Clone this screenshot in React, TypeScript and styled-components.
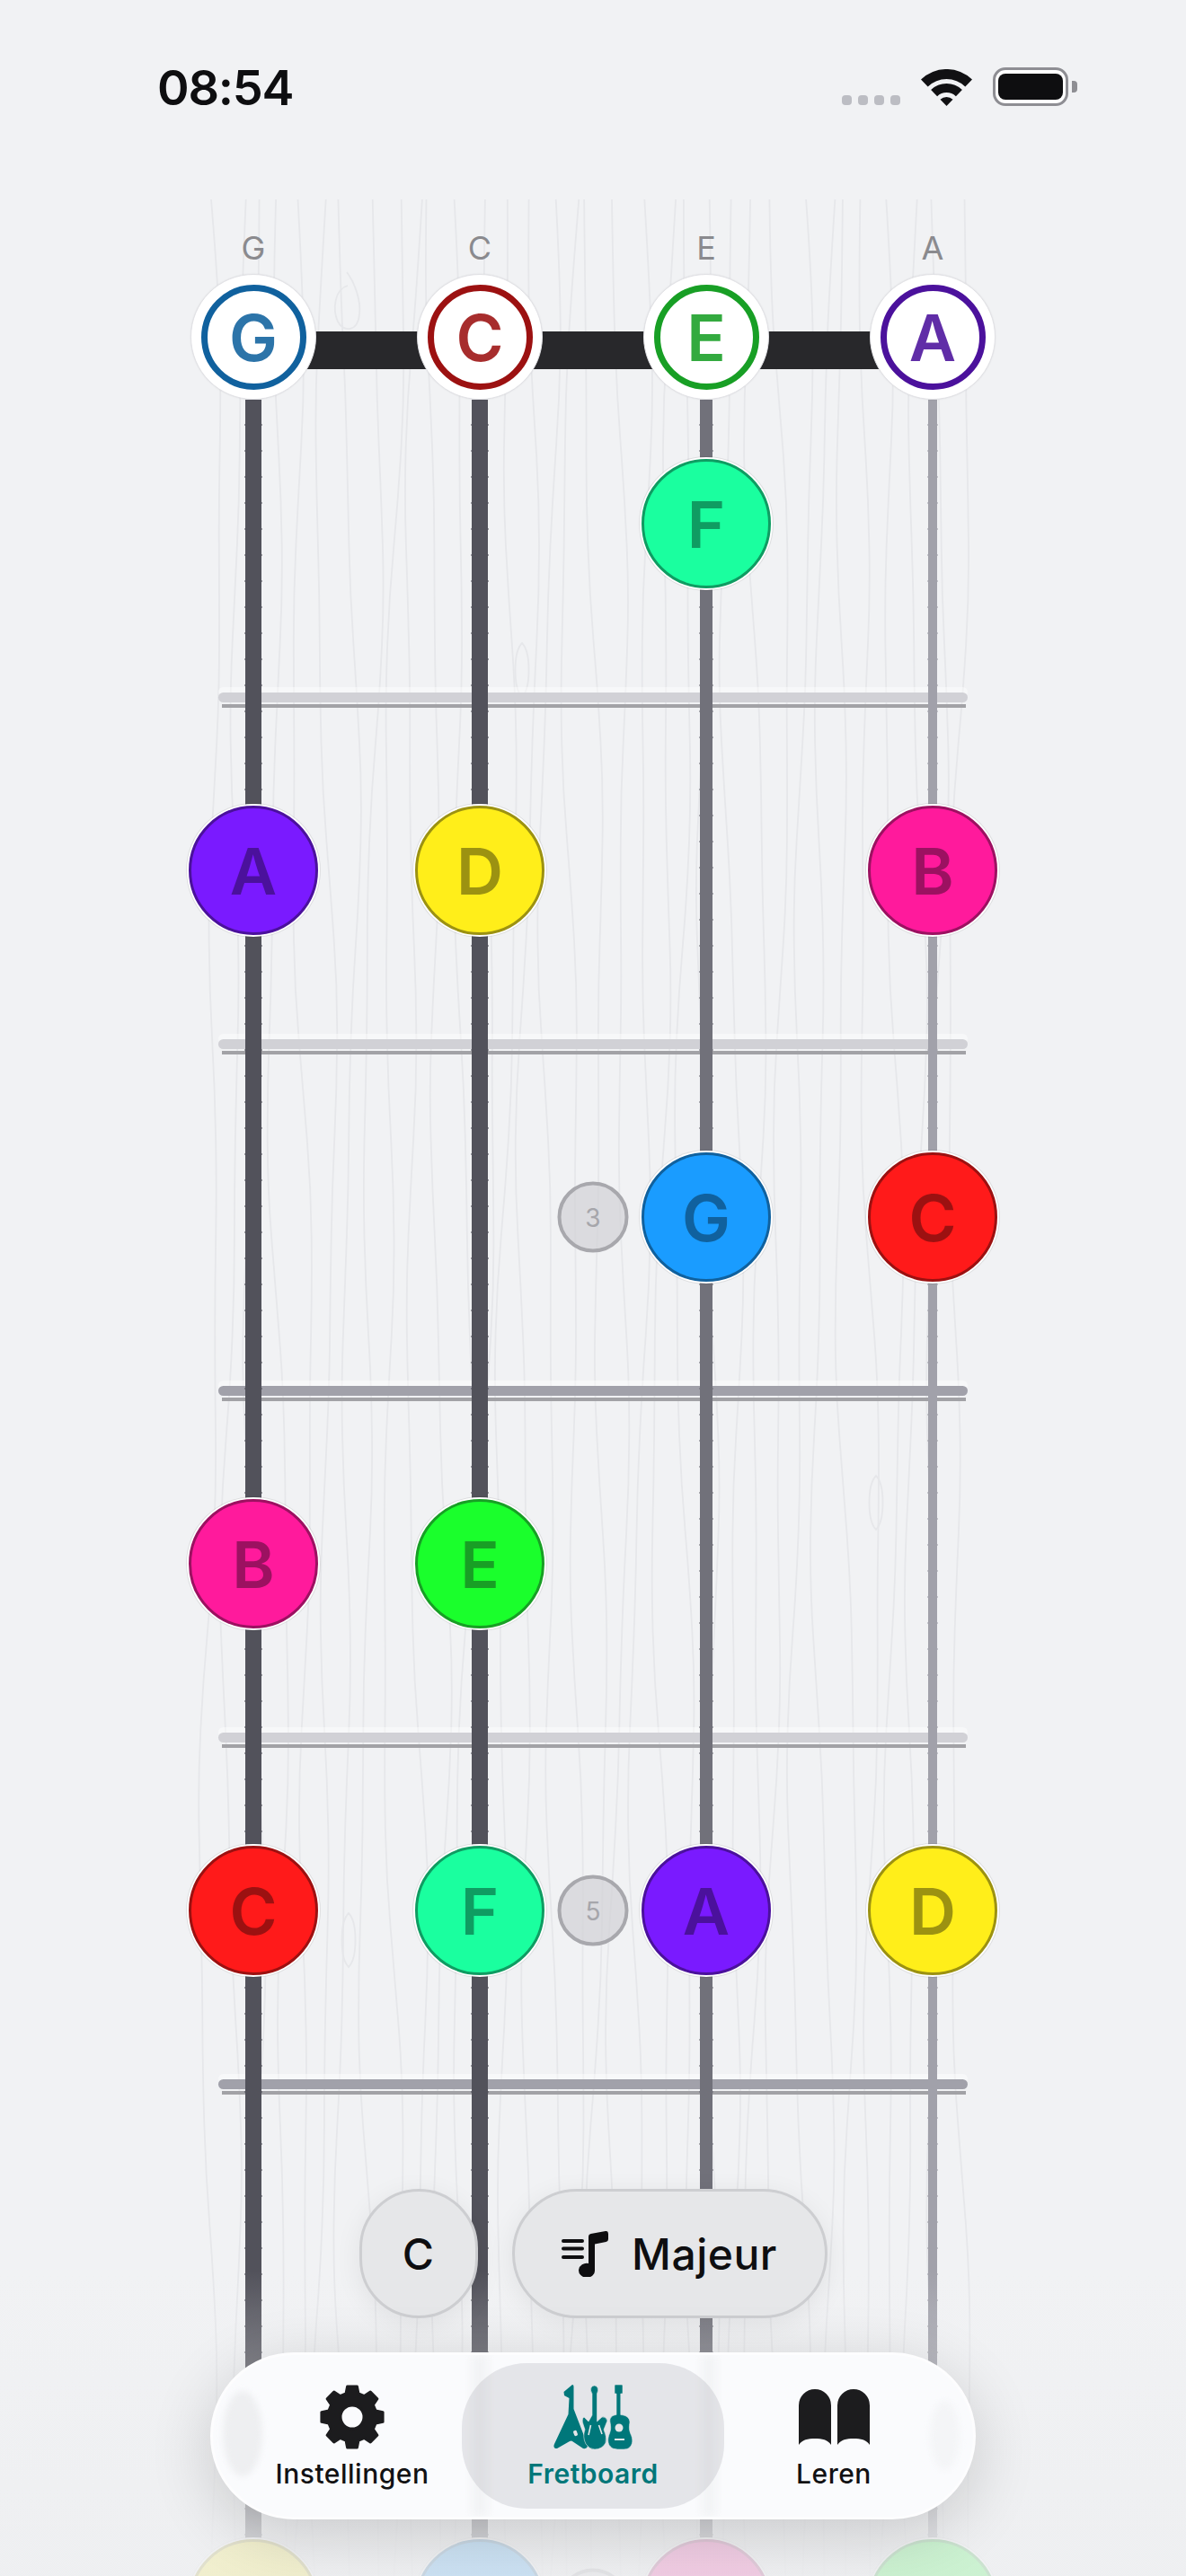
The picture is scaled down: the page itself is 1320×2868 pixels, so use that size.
import React from "react";
import styled, { createGlobalStyle } from "styled-components";

const GlobalStyle = createGlobalStyle`
  html, body {
    margin: 0;
    padding: 0;
    background: #f1f2f4;
  }
  * {
    box-sizing: border-box;
  }
`;

const Page = styled.div`
  position: relative;
  width: 1320px;
  height: 2868px;
  overflow: hidden;
  background: #f1f2f4;
  font-family: Inter, "Noto Sans", sans-serif;
  color: #0e0e10;
`;

/* status bar */
const StatusBar = styled.div`
  display: flex;
  justify-content: space-between;
  align-items: flex-start;
  height: 222px;
  padding: 75px 121px 0 175px;
`;
const Time = styled.div`
  font-size: 54px;
  font-weight: 600;
  line-height: 45px;
  letter-spacing: -1.2px;
`;
const StatusIcons = styled.div`
  display: flex;
  align-items: flex-end;
  gap: 23px;
  height: 43px;
`;
const Signal = styled.div`
  display: flex;
  gap: 7px;
  margin-bottom: 1px;
`;
const SignalDot = styled.span`
  width: 11px;
  height: 11px;
  border-radius: 4px;
  background: #bcbdc3;
`;
const Battery = styled.div`
  display: flex;
  align-items: center;
  gap: 4px;
`;
const BatteryBody = styled.div`
  width: 84px;
  height: 43px;
  padding: 4px 3px;
  border: 3px solid #8e8e93;
  border-radius: 14px;
  background: #fff;
`;
const BatteryFill = styled.div`
  height: 100%;
  border-radius: 8px;
  background: #0e0e10;
`;
const BatteryTip = styled.div`
  width: 6px;
  height: 13px;
  border-radius: 0 4px 4px 0;
  background: #8e8e93;
`;

/* fretboard */
const Board = styled.div`
  position: relative;
  width: 1008px;
  margin: 0 auto;
`;
const Grain = styled.svg`
  position: absolute;
  top: 0;
  left: -156px;
  width: 1320px;
  height: 2646px;
`;
const Strings = styled.div`
  position: absolute;
  top: 223px;
  left: 0;
  right: 0;
  height: 2423px;
  z-index: 2;
  display: grid;
  grid-template-columns: repeat(4, 252px);
  justify-items: center;
`;
const GuitarString = styled.div<{ $width: number; $color: string }>`
  position: relative;
  width: ${(p) => p.$width}px;
  background: ${(p) => p.$color};

  &::before {
    content: "";
    position: absolute;
    top: 0;
    bottom: 0;
    left: -1px;
    right: -1px;
    background: repeating-linear-gradient(
      to bottom,
      transparent 0,
      transparent 27px,
      ${(p) => p.$color}88 27px,
      ${(p) => p.$color}88 29px
    );
  }
`;
const LabelRow = styled.div`
  position: relative;
  display: grid;
  grid-template-columns: repeat(4, 252px);
  padding: 32px 0 7px;
`;
const StringLabel = styled.div`
  font-size: 36px;
  line-height: 44px;
  text-align: center;
  color: #8a8a8e;
`;
const NutRow = styled.div`
  position: relative;
  display: grid;
  grid-template-columns: repeat(4, 252px);
  justify-items: center;
  height: 140px;
  margin-bottom: -55px;

  &::before {
    content: "";
    position: absolute;
    top: 64px;
    left: 126px;
    right: 126px;
    height: 42px;
    background: #28282b;
    z-index: 2;
  }
`;
const OpenNote = styled.div<{ $dark: string }>`
  position: relative;
  z-index: 3;
  display: flex;
  align-items: center;
  justify-content: center;
  width: 140px;
  height: 140px;
  border: 1.5px solid #e1e1e5;
  border-radius: 50%;
  background: #fff;
  box-shadow: 0 0 2px rgba(0, 0, 0, 0.08);
  font-size: 72px;
  font-weight: 600;
  color: ${(p) => p.$dark};

  &::after {
    content: "";
    position: absolute;
    inset: 10.5px;
    border: 7px solid ${(p) => p.$dark};
    border-radius: 50%;
  }
`;
const OpenLetter = styled.span`
  opacity: 0.88;
`;
const FretRow = styled.div<{ $bar: string }>`
  position: relative;
  display: grid;
  grid-template-columns: repeat(4, 252px);
  grid-template-rows: 386px;
  justify-items: center;
  align-items: center;

  &::before {
    content: "";
    position: absolute;
    left: 87px;
    right: 87px;
    bottom: -6px;
    height: 11px;
    border-radius: 6px;
    background: ${(p) => p.$bar};
    box-shadow: 0 -6px 0 rgba(255, 255, 255, 0.45);
    z-index: 1;
  }

  &::after {
    content: "";
    position: absolute;
    left: 91px;
    right: 89px;
    bottom: -12px;
    height: 4px;
    background: #a2a2a6;
    z-index: 1;
  }
`;
const Note = styled.div<{ $fill: string; $dark: string }>`
  position: relative;
  z-index: 3;
  display: flex;
  align-items: center;
  justify-content: center;
  width: 144px;
  height: 144px;
  border: 3px solid ${(p) => p.$dark};
  border-radius: 50%;
  background: ${(p) => p.$fill};
  box-shadow: 0 0 0 2px #fff, 0 0 0 3px rgba(0, 0, 0, 0.08);
  font-size: 72px;
  font-weight: 600;
  color: ${(p) => p.$dark};
`;
const Marker = styled.div`
  position: absolute;
  top: 50%;
  left: 50%;
  z-index: 3;
  display: flex;
  align-items: center;
  justify-content: center;
  width: 79px;
  height: 79px;
  transform: translate(-50%, -50%);
  border: 4px solid #a8a8ad;
  border-radius: 50%;
  background: rgba(209, 209, 214, 0.7);
  font-size: 28px;
  color: #a6a6ab;
`;

/* fade at the bottom of the screen */
const BottomFade = styled.div`
  position: absolute;
  left: 0;
  right: 0;
  bottom: 0;
  height: 340px;
  z-index: 4;
  background: linear-gradient(to bottom, rgba(238, 239, 241, 0), rgba(238, 239, 241, 0.84) 90%);
`;

/* floating controls */
const Dock = styled.div`
  position: absolute;
  top: 2437px;
  left: 0;
  right: 0;
  z-index: 5;
  display: flex;
  flex-direction: column;
  align-items: center;
  gap: 38px;
`;
const Controls = styled.div`
  display: flex;
  gap: 38px;
`;
const ControlButton = styled.div<{ $width: number }>`
  display: flex;
  align-items: center;
  justify-content: center;
  gap: 26px;
  width: ${(p) => p.$width}px;
  height: 144px;
  border: 3px solid #cdced1;
  border-radius: 72px;
  background: #e6e7e9;
  box-shadow: 0 6px 30px rgba(0, 0, 0, 0.07);
  font-size: 48px;
  font-weight: 500;
  letter-spacing: 0.5px;
`;
const TabBar = styled.div`
  position: relative;
  display: flex;
  justify-content: center;
  width: 852px;
  height: 186px;
  padding-top: 9px;
  overflow: hidden;
  border: 3px solid #fdfdfe;
  border-radius: 93px;
  background: #fafbfd;
  box-shadow: 0 16px 70px rgba(0, 0, 0, 0.16);
`;
// what the glass bends of the strings behind it
const GlassBand = styled.div<{ $left: number; $width: number }>`
  position: absolute;
  top: 0;
  bottom: 0;
  left: ${(p) => p.$left}px;
  width: ${(p) => p.$width}px;
  background: #f2f3f5;
  filter: blur(5px);
`;
const GlassSpot = styled.div<{ $left: number; $top: number; $width: number; $height: number; $color: string }>`
  position: absolute;
  top: ${(p) => p.$top}px;
  left: ${(p) => p.$left}px;
  width: ${(p) => p.$width}px;
  height: ${(p) => p.$height}px;
  border-radius: 50%;
  background: ${(p) => p.$color};
  filter: blur(3px);
`;
const Tab = styled.div<{ $active?: boolean }>`
  position: relative;
  display: flex;
  flex-direction: column;
  align-items: center;
  flex: none;
  width: 292px;
  height: 162px;
  margin: 0 -12px;
  padding-top: 24px;
  border-radius: 72px;
  background: ${(p) => (p.$active ? "rgba(120, 120, 128, 0.16)" : "transparent")};
  color: ${(p) => (p.$active ? "#00777a" : "#111113")};
`;
const TabIcon = styled.div`
  display: flex;
  align-items: center;
  justify-content: center;
  height: 72px;
`;
const TabLabel = styled.div<{ $active?: boolean }>`
  margin-top: 9px;
  font-size: 30px;
  line-height: 36px;
  font-weight: ${(p) => (p.$active ? 600 : 500)};
  letter-spacing: 0.5px;
`;

type NoteName = "A" | "B" | "C" | "D" | "E" | "F" | "G";

const noteColors: Record<NoteName, { fill: string; dark: string }> = {
  A: { fill: "#7a1aff", dark: "#4b119c" },
  B: { fill: "#ff1a9c", dark: "#9c1161" },
  C: { fill: "#ff1a1a", dark: "#9c1111" },
  D: { fill: "#ffee1a", dark: "#9c9211" },
  E: { fill: "#1aff2c", dark: "#189f25" },
  F: { fill: "#1aff9f", dark: "#0f9c62" },
  G: { fill: "#1a9cff", dark: "#10619e" },
};

const openStrings: NoteName[] = ["G", "C", "E", "A"];

const stringStyles = [
  { width: 18, color: "#52525b" },
  { width: 18, color: "#52525b" },
  { width: 14, color: "#71717a" },
  { width: 10, color: "#a1a1aa" },
];

const frets: { notes: (NoteName | null)[]; bar: string; marker?: number }[] = [
  { notes: [null, null, "F", null], bar: "#d1d1d6" },
  { notes: ["A", "D", null, "B"], bar: "#d1d1d6" },
  { notes: [null, null, "G", "C"], bar: "#a1a1aa", marker: 3 },
  { notes: ["B", "E", null, null], bar: "#d1d1d6" },
  { notes: ["C", "F", "A", "D"], bar: "#a1a1aa", marker: 5 },
  { notes: [null, null, null, null], bar: "#d1d1d6" },
  { notes: ["D", "G", "B", "E"], bar: "#a1a1aa", marker: 7 },
];

// wobbly wood lines, same result on every run
function grainLine(baseX: number, index: number) {
  const points: [number, number][] = [];
  for (let y = 0; y <= 2750; y += 110) {
    const wobble =
      Math.sin(y / 170 + index * 1.7) * 7 + Math.sin(y / 73 + index * 2.9) * 3 + Math.sin(y / 410 + index) * 7;
    points.push([baseX + wobble, y]);
  }
  let d = `M${points[0][0].toFixed(1)} 0`;
  for (let i = 1; i < points.length - 1; i++) {
    const midX = (points[i][0] + points[i + 1][0]) / 2;
    const midY = (points[i][1] + points[i + 1][1]) / 2;
    d += ` Q${points[i][0].toFixed(1)} ${points[i][1]} ${midX.toFixed(1)} ${midY}`;
  }
  return d;
}

const grainLines = Array.from({ length: 34 }, (_, i) => grainLine(235 + i * 25.2, i));

function gearPath() {
  const cx = 36;
  const cy = 36;
  const polar = (r: number, deg: number) => {
    const a = (deg * Math.PI) / 180;
    return `${(cx + r * Math.cos(a)).toFixed(2)} ${(cy + r * Math.sin(a)).toFixed(2)}`;
  };
  let d = "";
  for (let i = 0; i < 8; i++) {
    const a = i * 45 - 90;
    d += `${i === 0 ? "M" : "L"}${polar(27, a - 15)} L${polar(34.5, a - 9)} L${polar(34.5, a + 9)} L${polar(27, a + 15)} `;
  }
  return `${d}Z M${cx - 13} ${cy} a13 13 0 1 0 26 0 a13 13 0 1 0 -26 0 Z`;
}

function WifiIcon() {
  return (
    <svg width="57" height="41" viewBox="0 0 57 41" fill="#111113">
      <path d="M0 11.5 A41 41 0 0 1 57 11.5 L49.3 19.4 A30 30 0 0 0 7.7 19.4 Z" />
      <path d="M11.1 23 A25 25 0 0 1 45.9 23 L38.9 30.2 A15 15 0 0 0 18.1 30.2 Z" />
      <path d="M21.5 33.8 A10 10 0 0 1 35.5 33.8 L28.5 41 Z" />
    </svg>
  );
}

function ScaleIcon() {
  return (
    <svg width="52" height="51" viewBox="0 0 52 51" fill="#0e0e10">
      <rect x="0" y="9" width="25" height="4" rx="2" />
      <rect x="0" y="17.5" width="25" height="4" rx="2" />
      <rect x="0" y="27" width="25" height="4" rx="2" />
      <path d="M30 6 Q30 3.5 32.5 3 L49 0 Q52 -0.3 52 3 V9 Q52 11.5 49.5 12 L37 14.5 V43 A9 8 0 1 1 30 36 Z" />
    </svg>
  );
}

function GearIcon() {
  return (
    <svg width="72" height="72" viewBox="0 0 72 72">
      <path d={gearPath()} fill="#1c1c1e" stroke="#1c1c1e" strokeWidth="3" strokeLinejoin="round" fillRule="evenodd" />
    </svg>
  );
}

function GuitarsIcon() {
  const pill = "#e5e6e8";
  return (
    <svg width="88" height="72" viewBox="0 0 88 72" fill="#00777a">
      <path d="M11.5 8 L21 0 Q22.5 0 22.5 2 V27 L37.5 66 Q39 72 33 71 L21 63 Q20 62 18 63 L4 71 Q-1 71 1 66 L16.5 33 L17.5 15 L12 12 Z" />
      <rect x="22.5" y="51" width="4" height="6" rx="1.5" fill={pill} transform="rotate(-20 24.5 54)" />
      <path
        d="M43 34 V10 Q40.5 6 42 3 Q45.5 -1 49 3 Q50.5 6 48.5 10 V34 V41 L54 36 Q58 35 60 40 L56 50 Q60 58 58 65 Q54 72 46 72 Q40 72 36 66 Q32 58 35 50 L33 44 Q31 38 34 36 L39 41 L43 34 Z"
        stroke={pill}
        strokeWidth="0.6"
      />
      <path d="M41.5 45 L39 56 M50.5 45 L54 55" stroke={pill} strokeWidth="1.6" fill="none" />
      <path
        d="M70 33.5 V10 H68 V1 Q68 0 69 0 H76 Q77 0 77 1 V10 H74.8 V33.5 C81 34 85 37 85 42 C84 47 84 50 86 55 C88 59 89 65 85.5 69 C83 72 80 72 75 72 C70 72 66 72 63.5 69 C60 66 60 60 62.5 54 C64 50 64 47 63 42 C62 37 65 34 70 33.5 Z"
        stroke={pill}
        strokeWidth="0.6"
      />
      <circle cx="73" cy="48" r="4.5" fill={pill} />
      <rect x="68" y="60" width="11" height="2" fill={pill} />
    </svg>
  );
}

function BookIcon() {
  return (
    <svg width="79" height="62" viewBox="0 0 79 62" fill="#1c1c1e">
      <path d="M0 18 A18 18 0 0 1 36 18 V62 C32 56 26 55 18 55 C10 55 4 56 0 62 Z" />
      <path d="M43 18 A18 18 0 0 1 79 18 V62 C75 56 69 55 61 55 C53 55 47 56 43 62 Z" />
    </svg>
  );
}

function App() {
  return (
    <Page>
      <GlobalStyle />
      <StatusBar>
        <Time>08:54</Time>
        <StatusIcons>
          <Signal>
            <SignalDot />
            <SignalDot />
            <SignalDot />
            <SignalDot />
          </Signal>
          <WifiIcon />
          <Battery>
            <BatteryBody>
              <BatteryFill />
            </BatteryBody>
            <BatteryTip />
          </Battery>
        </StatusIcons>
      </StatusBar>

      <Board>
        <Grain viewBox="0 0 1320 2646" fill="none" stroke="#e6e7ea" strokeWidth="1.8">
          {grainLines.map((d, i) => (
            <path key={i} d={d} />
          ))}
          <path d="M387 96 C372 100 370 123 376 136 C382 148 398 148 400 128 C402 113 395 93 386 81" />
          <path d="M581 494 C571 504 571 544 581 554 C591 544 591 504 581 494 Z" />
          <path d="M975 1421 C965 1431 965 1471 975 1481 C985 1471 985 1431 975 1421 Z" />
          <path d="M388 1908 C378 1918 378 1958 388 1968 C398 1958 398 1918 388 1908 Z" />
        </Grain>
        <Strings>
          {stringStyles.map((s, i) => (
            <GuitarString key={i} $width={s.width} $color={s.color} />
          ))}
        </Strings>

        <LabelRow>
          {openStrings.map((n) => (
            <StringLabel key={n}>{n}</StringLabel>
          ))}
        </LabelRow>
        <NutRow>
          {openStrings.map((n) => (
            <OpenNote key={n} $dark={noteColors[n].dark}>
              <OpenLetter>{n}</OpenLetter>
            </OpenNote>
          ))}
        </NutRow>

        {frets.map((fret, i) => (
          <FretRow key={i} $bar={fret.bar}>
            {fret.notes.map((n, j) =>
              n ? (
                <Note key={j} $fill={noteColors[n].fill} $dark={noteColors[n].dark}>
                  {n}
                </Note>
              ) : (
                <span key={j} />
              )
            )}
            {fret.marker && <Marker>{fret.marker}</Marker>}
          </FretRow>
        ))}
      </Board>

      <BottomFade />

      <Dock>
        <Controls>
          <ControlButton $width={132}>C</ControlButton>
          <ControlButton $width={351}>
            <ScaleIcon />
            Majeur
          </ControlButton>
        </Controls>
        <TabBar>
          <GlassBand $left={288} $width={18} />
          <GlassBand $left={544} $width={16} />
          <GlassSpot $left={11} $top={40} $width={44} $height={95} $color="#eeeff1" />
          <GlassSpot $left={798} $top={51} $width={33} $height={77} $color="#f4f5f7" />
          <Tab>
            <TabIcon>
              <GearIcon />
            </TabIcon>
            <TabLabel>Instellingen</TabLabel>
          </Tab>
          <Tab $active>
            <TabIcon>
              <GuitarsIcon />
            </TabIcon>
            <TabLabel $active>Fretboard</TabLabel>
          </Tab>
          <Tab>
            <TabIcon>
              <BookIcon />
            </TabIcon>
            <TabLabel>Leren</TabLabel>
          </Tab>
        </TabBar>
      </Dock>
    </Page>
  );
}

export default App;
